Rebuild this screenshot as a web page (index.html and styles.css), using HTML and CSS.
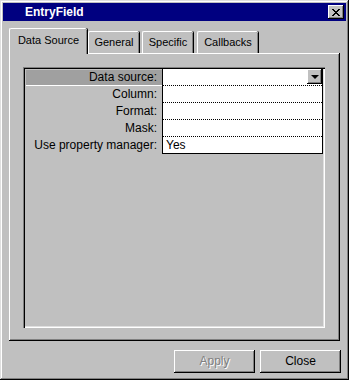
FILE: index.html
```html
<!DOCTYPE html>
<html lang="en">
<head>
  <meta charset="UTF-8">
  <title>EntryField</title>
  <link rel="stylesheet" href="styles.css">
</head>
<body>
  <div class="window">
    <div class="titlebar">
      <span class="title">EntryField</span>
      <div class="close-btn">
        <svg width="8" height="7" viewBox="0 0 8 7">
          <path d="M0 0 L7 7 M1 0 L8 7 M7 0 L0 7 M8 0 L1 7" stroke="#000" stroke-width="1" fill="none"/>
        </svg>
      </div>
    </div>

    <div class="tabs">
      <div class="tab active">Data Source</div>
      <div class="tab tab-general">General</div>
      <div class="tab tab-specific">Specific</div>
      <div class="tab tab-callbacks">Callbacks</div>
    </div>

    <div class="panel">
      <div class="props">
        <div class="labels">
          <div class="label selected">Data source:</div>
          <div class="label">Column:</div>
          <div class="label">Format:</div>
          <div class="label">Mask:</div>
          <div class="label">Use property manager:</div>
        </div>
        <div class="values">
          <div class="value"><span class="dropdown"><span class="arrow"></span></span></div>
          <div class="value"></div>
          <div class="value"></div>
          <div class="value"></div>
          <div class="value last">Yes</div>
        </div>
      </div>
    </div>

    <div class="buttons">
      <div class="button disabled">Apply</div>
      <div class="button">Close</div>
    </div>
  </div>
</body>
</html>
```

FILE: styles.css
```css
body {
  margin: 0;
  padding: 0;
  background: #c0c0c0;
  font-family: "Liberation Sans", Arial, sans-serif;
  font-size: 12px;
  color: #000;
}
.window {
  width: 349px;
  height: 380px;
  box-sizing: border-box;
  padding: 3px;
  background: #c0c0c0;
  display: flex;
  flex-direction: column;
  box-shadow: inset -1px -1px #000, inset 1px 1px #dfdfdf, inset -2px -2px #808080, inset 2px 2px #fff;
}
.titlebar {
  height: 18px;
  background: #000080;
  display: flex;
  align-items: center;
  justify-content: space-between;
  padding: 0 2px 0 22px;
}
.title {
  color: #fff;
  font-weight: bold;
  font-size: 12px;
}
.close-btn {
  width: 16px;
  height: 14px;
  box-sizing: border-box;
  background: #c0c0c0;
  display: flex;
  align-items: center;
  justify-content: center;
  box-shadow: inset -1px -1px #000, inset 1px 1px #fff, inset -2px -2px #808080;
}
.tabs {
  display: flex;
  align-items: flex-end;
  margin-top: 7px;
  padding-left: 6px;
  height: 25px;
  position: relative;
  z-index: 1;
}
.tab {
  height: 22px;
  box-sizing: border-box;
  padding-top: 4px;
  text-align: center;
  font-size: 11px;
  border-top: 1px solid #fff;
  border-left: 1px solid #fff;
  border-top-left-radius: 2px;
  border-top-right-radius: 2px;
  box-shadow: inset -1px 0 #808080, 1px 0 #000;
}
.tab.active {
  width: 78px;
  height: 26px;
  margin-bottom: -1px;
  padding-top: 5px;
  background: #c0c0c0;
  margin-right: 1px;
}
.tab-general {
  width: 51px;
  margin-right: 3px;
}
.tab-specific {
  width: 51px;
  margin-right: 4px;
}
.tab-callbacks {
  width: 61px;
}
.panel {
  height: 288px;
  box-sizing: border-box;
  margin: 0 6px;
  padding: 14px 15px 13px 14px;
  box-shadow: inset -1px -1px #000, inset 1px 1px #fff, inset -2px -2px #808080;
}
.props {
  height: 100%;
  box-sizing: border-box;
  display: flex;
  align-items: flex-start;
  padding: 2px 1px 1px 2px;
  box-shadow: inset 1px 1px #808080, inset 2px 2px #000, inset -1px -1px #fff, inset -2px -2px #dfdfdf;
}
.labels {
  width: 137px;
  display: flex;
  flex-direction: column;
}
.label {
  height: 17px;
  line-height: 16px;
  text-align: right;
  padding-right: 5px;
  box-sizing: border-box;
}
.label.selected {
  background: #a0a0a0;
  margin: 1px 0 0 1px;
  height: 15px;
  line-height: 14px;
  border-bottom: 1px solid #fff;
  box-sizing: content-box;
}
.values {
  flex: 1;
  background: #fff;
  border: 1px solid #000;
  border-top-width: 0;
  margin-right: 1px;
  display: flex;
  flex-direction: column;
}
.value {
  height: 17px;
  box-sizing: border-box;
  border-bottom: 1px dotted #000;
  padding-left: 3px;
  line-height: 17px;
  position: relative;
}
.value.last {
  border-bottom: none;
  height: 16px;
}
.dropdown {
  position: absolute;
  right: 0;
  top: 0;
  width: 15px;
  height: 15px;
  box-sizing: border-box;
  background: #c0c0c0;
  display: flex;
  align-items: center;
  justify-content: center;
  box-shadow: inset -1px -1px #000, inset 1px 1px #fff, inset -2px -2px #808080;
}
.arrow {
  width: 0;
  height: 0;
  border-left: 4px solid transparent;
  border-right: 4px solid transparent;
  border-top: 4px solid #000;
}
.buttons {
  display: flex;
  justify-content: flex-end;
  gap: 5px;
  margin-top: 9px;
  padding-right: 5px;
}
.button {
  width: 81px;
  height: 23px;
  box-sizing: border-box;
  text-align: center;
  line-height: 22px;
  box-shadow: inset -1px -1px #000, inset 1px 1px #fff, inset -2px -2px #808080;
}
.button.disabled {
  color: #808080;
  text-shadow: 1px 1px #fff;
}
```
